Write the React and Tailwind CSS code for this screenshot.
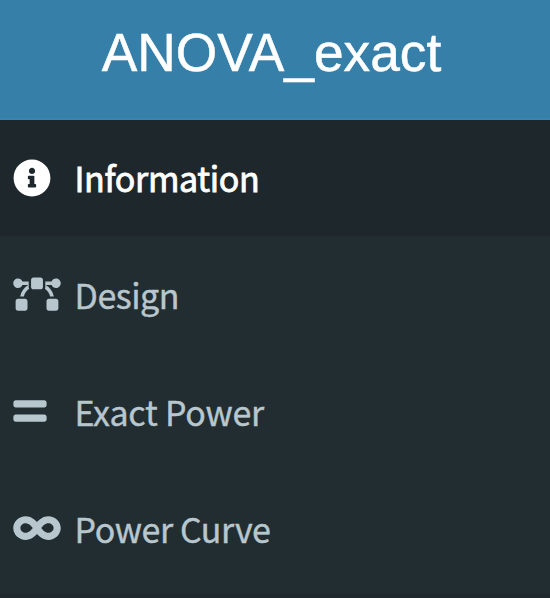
import { FaInfoCircle, FaBezierCurve, FaEquals, FaInfinity } from "react-icons/fa";

const items = [
  { label: "Information", Icon: FaInfoCircle, iconWidth: "w-[38px]", track: "tracking-[-0.35px]", active: true },
  { label: "Design", Icon: FaBezierCurve, iconWidth: "w-[48px]", track: "tracking-[-0.5px]" },
  { label: "Exact Power", Icon: FaEquals, iconWidth: "w-[34px]", track: "tracking-[-0.25px]" },
  { label: "Power Curve", Icon: FaInfinity, iconWidth: "w-[48px]", track: "tracking-[-0.4px]" },
];

export default function App() {
  return (
    <div className="flex h-[598px] w-[550px] flex-col overflow-hidden bg-[#222d32]">
      <header className="flex h-[120px] shrink-0 justify-center border-b-2 border-[#3884b2] bg-[#367fa9] pr-[7px] pt-[13px] font-['Liberation_Sans',Arial,sans-serif] text-[53.3px] leading-[80px] text-white [-webkit-text-stroke:0.5px_currentColor]">
        ANOVA_exact
      </header>
      <nav className="flex shrink-0 flex-col font-['Noto_Sans_CJK_SC','Source_Sans_Pro',sans-serif] text-[34px]">
        {items.map(({ label, Icon, iconWidth, track, active }) => (
          <a
            key={label}
            className={`flex items-center pl-[13px] ${
              active
                ? "h-[116px] bg-[#1e282c] text-white [-webkit-text-stroke:0.8px_currentColor]"
                : "h-[117px] text-[#b8c7ce] [-webkit-text-stroke:0.4px_currentColor]"
            }`}
          >
            <span className={`flex w-[61.5px] shrink-0 ${active ? "pb-0" : "pb-[2px]"}`}>
              <Icon className={`h-[38px] ${iconWidth}`} />
            </span>
            <span className={`whitespace-nowrap leading-[50px] ${track} ${active ? "pb-px" : "pt-px"}`}>
              {label}
            </span>
          </a>
        ))}
      </nav>
      <div className="mt-auto h-[4px] shrink-0 bg-[#1f292e]" />
    </div>
  );
}
